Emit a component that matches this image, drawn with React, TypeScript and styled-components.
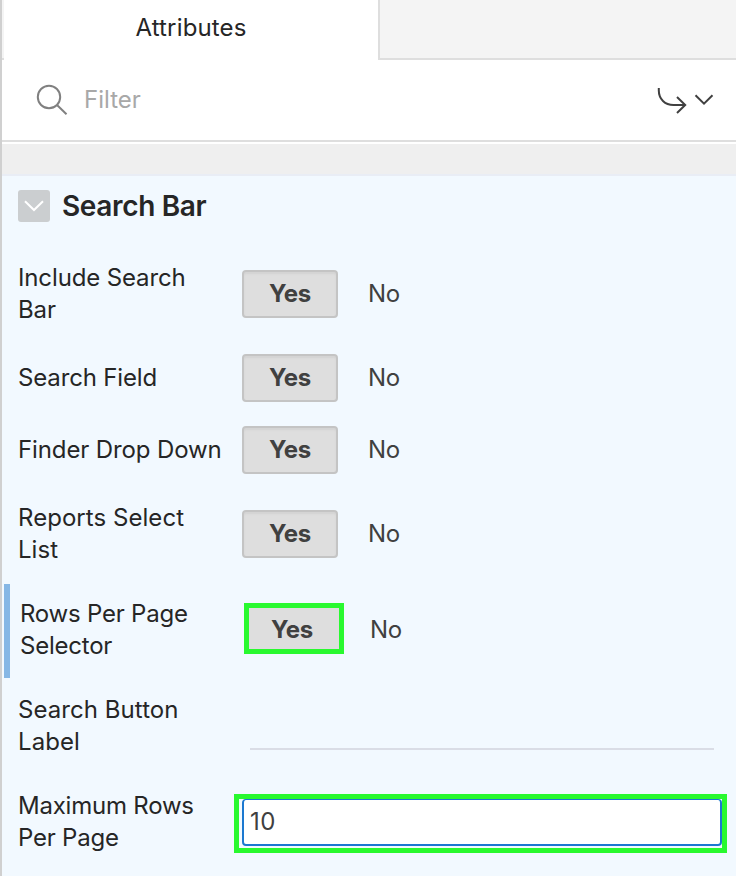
import React from "react";
import styled, { createGlobalStyle } from "styled-components";

const GlobalStyle = createGlobalStyle`
  * { box-sizing: border-box; }
  body { margin: 0; background: #f2f9ff; }
`;
const Panel = styled.main`
  width: 736px; height: 876px; overflow: hidden;
  display: flex; flex-direction: column;
  border-left: 2px solid #d0d0d0;
  background: #f2f9ff; color: #262626;
  font: 400 24px/32px Inter, sans-serif;
`;
const Tabs = styled.header`
  display: flex; height: 60px; flex: none; background: #f4f4f4;
`;
const TabGap = styled.div`
  width: 2px; border-bottom: 2px solid #dedede;
`;
const Tab = styled.div`
  width: 374px; background: #fff; text-align: center; padding-top: 12px;
  letter-spacing: 0.15px;
`;
const TabRest = styled.div`
  flex: 1; border-left: 2px solid #dedede; border-bottom: 2px solid #dedede;
`;
const FilterBar = styled.label`
  display: flex; align-items: center; height: 82px; flex: none;
  background: #fff; border-bottom: 2px solid #dedede; padding: 0 22px 0 34px;
`;
const FilterInput = styled.input`
  flex: 1; min-width: 0; margin: 0 0 0 14px; padding: 0; border: 0; outline: 0;
  background: none; color: #262626; font: inherit;
  &::placeholder { color: #a8a8a8; opacity: 1; }
`;
const Icon = styled.svg`
  display: block; flex: none; fill: none; stroke: currentColor; stroke-width: 2;
`;
const SearchIcon = styled(Icon)`color: #808080;`;
const ActionIcon = styled(Icon)`color: #404040;`;
const Strip = styled.div`
  height: 34px; flex: none; background: #efefef;
  border-top: 2px solid #fff; border-bottom: 2px solid #e9edf5;
`;
const Heading = styled.h2`
  display: flex; align-items: center; height: 60px; flex: none; gap: 12px;
  margin: 0 0 10px; padding-left: 16px; font-size: 28px; font-weight: 600;
  letter-spacing: -0.35px;
`;
const Toggle = styled.button`
  display: flex; width: 32px; height: 32px; border: 0; padding: 0;
  border-radius: 3px; background: #cbced0; color: #fff;
`;
const Row = styled.div<{ $single?: boolean; $active?: boolean }>`
  display: flex; align-items: center; flex: none;
  height: ${p => (p.$single ? 72 : 96)}px;
  padding-left: ${p => (p.$active ? 18 : 16)}px;
  background: ${p => p.$active
    ? "linear-gradient(#86b7e5, #86b7e5) 2px 2px / 6px 94px no-repeat"
    : "none"};
`;
const Label = styled.span<{ $tracking?: number }>`
  width: 224px; flex: none; white-space: pre-line;
  letter-spacing: ${p => p.$tracking ?? 0}px;
`;
const Yes = styled.button<{ $marked?: boolean }>`
  width: ${p => (p.$marked ? 100 : 96)}px; height: ${p => (p.$marked ? 51 : 48)}px;
  margin: ${p => (p.$marked ? "-3px -4px 0 0" : "0")};
  padding: ${p => (p.$marked ? "2px 4px 0 0" : "0")};
  border: ${p => (p.$marked ? "5px solid #29f92f" : "2px solid #c4c4c4")};
  border-radius: ${p => (p.$marked ? 0 : 4)}px;
  background: #dedede; color: #404040;
  box-shadow: ${p => (p.$marked ? "none" : "inset 0 2px 2px #d3d3d3")};
  font: 700 24px/32px Inter, sans-serif;
  letter-spacing: -0.2px;
`;
const No = styled.span`
  margin-left: 30px; color: #404040; letter-spacing: -0.4px;
`;
const TextInput = styled.input`
  width: 464px; height: 48px; margin-left: 8px; padding: 0;
  border: 0; border-bottom: 2px solid #dadde6; outline: 0;
  background: none; font: inherit;
`;
const Highlight = styled.div`
  width: 493px; height: 59px; flex: none; margin: 3px 0 0 -8px;
  border: 5px solid #29f92f; background: #f2f9ff; padding: 0 0 2px 3px;
`;
const NumberInput = styled.input`
  display: block; width: 480px; height: 47px; padding: 0 0 1px 6px;
  border: 2px solid #1b78d0; border-top-width: 1px; border-radius: 4px; outline: 0;
  background: #fff; color: #404040; font: inherit; letter-spacing: 0.5px;
`;

const switches = [
  { label: "Include Search\nBar", tracking: -0.13 },
  { label: "Search Field", tracking: -0.15, single: true },
  { label: "Finder Drop Down", tracking: -0.12, single: true },
  { label: "Reports Select\nList", tracking: 0.05 },
  { label: "Rows Per Page\nSelector", tracking: -0.22, active: true },
];

export default function App() {
  return (
    <>
      <GlobalStyle />
      <Panel>
        <Tabs><TabGap /><Tab>Attributes</Tab><TabRest /></Tabs>
        <FilterBar>
          <SearchIcon width="34" height="34" viewBox="0 0 34 34">
            <circle cx="13" cy="14" r="11.2" /><path d="m21 22 9.5 9.2" />
          </SearchIcon>
          <FilterInput placeholder="Filter" />
          <ActionIcon width="58" height="32" viewBox="0 0 58 32">
            <path d="M2.8 4v2.5C2.8 15 9 21 17.5 21H29M21 13l8.2 8-8.2 8" />
            <path d="m39.5 11.3 8.5 8.4 8.5-8.4" />
          </ActionIcon>
        </FilterBar>
        <Strip />
        <Heading>
          <Toggle aria-label="Collapse section">
            <Icon width="32" height="32" viewBox="0 0 32 32">
              <path d="m7 11.3 9 8.7 9-8.7" />
            </Icon>
          </Toggle>
          Search Bar
        </Heading>
        {switches.map(({ label, tracking, single, active }) => (
          <Row key={label} $single={single} $active={active}>
            <Label $tracking={tracking}>{label}</Label>
            <Yes $marked={active}>Yes</Yes>
            <No>No</No>
          </Row>
        ))}
        <Row><Label $tracking={0.06}>{"Search Button\nLabel"}</Label><TextInput /></Row>
        <Row>
          <Label $tracking={-0.22}>{"Maximum Rows\nPer Page"}</Label>
          <Highlight><NumberInput defaultValue="10" /></Highlight>
        </Row>
      </Panel>
    </>
  );
}
